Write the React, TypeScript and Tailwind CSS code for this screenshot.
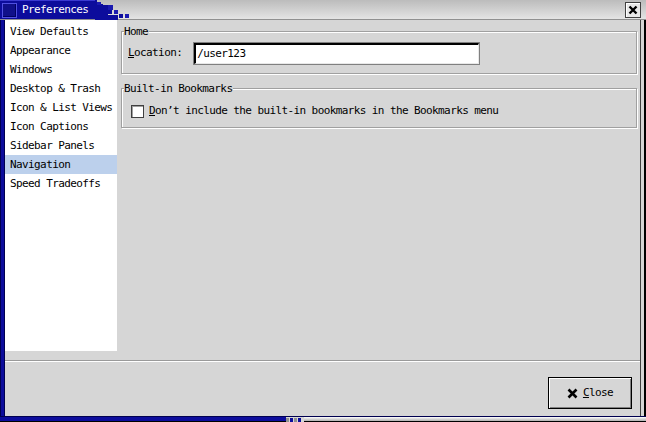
import React from "react";

const font = { fontFamily: '"DejaVu Sans Mono", "Liberation Mono", monospace' };

const items = [
  "View Defaults",
  "Appearance",
  "Windows",
  "Desktop & Trash",
  "Icon & List Views",
  "Icon Captions",
  "Sidebar Panels",
  "Navigation",
  "Speed Tradeoffs",
];

function Frame({ label, children }: { label: string; children: React.ReactNode }) {
  return (
    <div className="relative border border-[#a0a0a0] shadow-[inset_1px_1px_0_#ffffff,1px_1px_0_#ffffff]">
      <div className="absolute left-[2px] top-[-7px] bg-[#d6d6d6] pr-[1px] leading-[13px] text-black">{label}</div>
      {children}
    </div>
  );
}

export default function App() {
  return (
    <div
      className="w-[646px] h-[422px] bg-[#d6d6d6] flex flex-col text-[11px] tracking-[-0.6px] text-black overflow-hidden"
      style={font}
    >
      {/* Title bar */}
      <div className="h-[20px] flex items-stretch bg-gradient-to-b from-[#bcbcbc] to-[#e4e4e4] border-b border-[#909090]">
        <div className="flex items-center w-[95px] bg-[#0c0c9c] border-t border-[#3a3ad0]">
          <div className="ml-[2px] w-[15px] h-[15px] bg-[#10108a] border border-[#5050e0] shadow-[inset_-1px_-1px_0_#000060]" />
          <span className="ml-[5px] text-white text-[11px] tracking-[-0.6px]">Preferences</span>
        </div>
        <svg width="40" height="20" viewBox="0 0 40 20" shapeRendering="crispEdges">
          <rect x="0" y="0" width="2" height="20" fill="#0c0c9c" />
          <rect x="0" y="4" width="8" height="16" fill="#0c0c9c" />
          <rect x="2" y="2" width="4" height="3" fill="#1a1ab0" />
          <rect x="8" y="5" width="5" height="15" fill="#0c0c9c" />
          <rect x="13" y="5" width="5" height="5" fill="#1a1ab0" />
          <rect x="13" y="10" width="4" height="4" fill="#0c0c9c" />
          <rect x="19" y="10" width="4" height="4" fill="#1a1ab0" />
          <rect x="24" y="14" width="4" height="4" fill="#0c0c9c" />
          <rect x="30" y="14" width="4" height="4" fill="#1a1ab0" />
          <rect x="13" y="15" width="10" height="5" fill="#0c0c9c" />
        </svg>
        <div className="flex-1" />
        <div className="flex items-center mr-[5px]">
          <div className="w-[16px] h-[16px] bg-[#e8e8e8] border border-[#404040] shadow-[inset_1px_1px_0_#ffffff] flex items-center justify-center">
            <svg width="10" height="10" viewBox="0 0 10 10">
              <path d="M1.5 1.5 L8.5 8.5 M8.5 1.5 L1.5 8.5" stroke="#000" strokeWidth="2.4" />
            </svg>
          </div>
        </div>
      </div>

      {/* Body */}
      <div className="flex-1 flex">
        <div className="w-[5px] bg-[#0c0c9c] border-l border-[#000050] border-r border-[#000050]" />
        <div className="flex-1 flex flex-col">
          <div className="flex h-[331px]">
            <div className="w-[112px] bg-white pt-[2px]">
              {items.map((it) => (
                <div
                  key={it}
                  className={`h-[19px] leading-[19px] pl-[5px] whitespace-nowrap ${
                    it === "Navigation" ? "bg-[#bcd0ec]" : ""
                  }`}
                >
                  {it}
                </div>
              ))}
            </div>
            <div className="flex-1 pl-[4px] pr-[3px] pt-[11px] flex flex-col gap-[14px]">
              <Frame label="Home">
                <div className="h-[41px] flex items-center pl-[6px] pt-[2px]">
                  <span>
                    <span className="underline">L</span>ocation:
                  </span>
                  <div className="ml-[12px] w-[285px] h-[21px] bg-white border-t-2 border-l-2 border-[#000] border-b border-r border-b-[#e8e8e8] border-r-[#e8e8e8] outline outline-1 outline-[#808080] flex items-center pl-[1px]">
                    /user123
                  </div>
                </div>
              </Frame>
              <Frame label="Built-in Bookmarks">
                <div className="h-[38px] flex items-center pl-[9px] pt-[6px]">
                  <div className="w-[13px] h-[13px] bg-white border border-[#404040] shadow-[inset_1px_1px_0_#a0a0a0]" />
                  <span className="ml-[5px]">
                    <span className="underline">D</span>on&#8217;t include the built-in bookmarks in the Bookmarks menu
                  </span>
                </div>
              </Frame>
            </div>
          </div>
          <div className="mt-[9px] h-[2px] border-t border-[#9a9a9a] border-b border-b-white" />
          <div className="flex-1 flex justify-end items-start pt-[15px] pr-[8px]">
            <div className="w-[84px] h-[32px] border border-black bg-[#d6d6d6] shadow-[inset_1px_1px_0_#ffffff,inset_-1px_-1px_0_#808080] flex items-center justify-center gap-[5px]">
              <svg width="11" height="11" viewBox="0 0 11 11">
                <path d="M1.5 1.5 L9.5 9.5 M9.5 1.5 L1.5 9.5" stroke="#000" strokeWidth="2.6" />
              </svg>
              <span>
                <span className="underline">C</span>lose
              </span>
            </div>
          </div>
        </div>
        <div className="w-[6px] bg-[#d6d6d6] border-l border-[#404040] border-r-2 border-r-black" />
      </div>
      <div className="h-[6px] flex border-t border-[#000050]">
        <div className="w-[286px] bg-[#0c0c9c] border-b border-black" />
        <svg width="18" height="6" viewBox="0 0 18 6" shapeRendering="crispEdges">
          <rect x="0" y="0" width="18" height="6" fill="#d6d6d6" />
          <rect x="0" y="1" width="3" height="4" fill="#909090" />
          <rect x="4" y="1" width="3" height="4" fill="#0c0c9c" />
          <rect x="8" y="1" width="3" height="4" fill="#909090" />
          <rect x="12" y="1" width="3" height="4" fill="#0c0c9c" />
        </svg>
        <div className="flex-1 bg-gradient-to-b from-[#ffffff] to-[#b0b0b0] border-b border-black" />
      </div>
    </div>
  );
}
